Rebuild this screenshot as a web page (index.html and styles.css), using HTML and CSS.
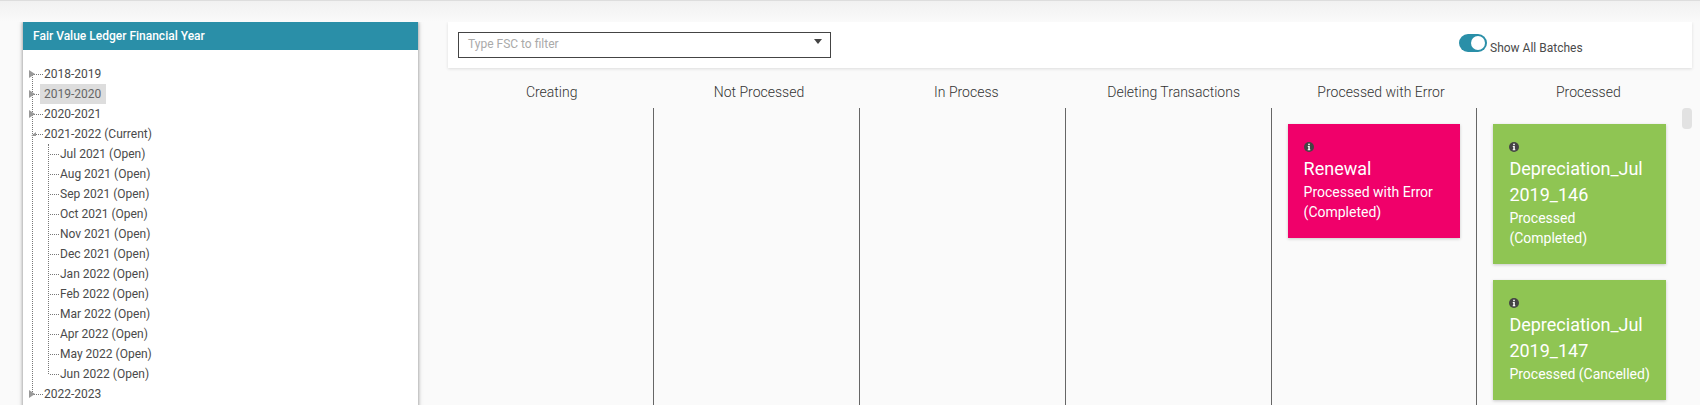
FILE: index.html
```html
<!DOCTYPE html>
<html lang="en">

<head>
    <meta charset="UTF-8">
    <title>Batches</title>
    <link rel="stylesheet" href="styles.css">
</head>

<body>
    <div class="topstrip"></div>
    <div class="main">
        <div class="panel">
            <div class="panel-head">Fair Value Ledger Financial Year</div>
            <ul class="tree">
                <li class="closed"><span class="node">2018-2019</span></li>
                <li class="closed"><span class="node selected">2019-2020</span></li>
                <li class="closed"><span class="node">2020-2021</span></li>
                <li class="open"><span class="node">2021-2022 (Current)</span>
                    <ul class="subtree">
                        <li><span class="node">Jul 2021 (Open)</span></li>
                        <li><span class="node">Aug 2021 (Open)</span></li>
                        <li><span class="node">Sep 2021 (Open)</span></li>
                        <li><span class="node">Oct 2021 (Open)</span></li>
                        <li><span class="node">Nov 2021 (Open)</span></li>
                        <li><span class="node">Dec 2021 (Open)</span></li>
                        <li><span class="node">Jan 2022 (Open)</span></li>
                        <li><span class="node">Feb 2022 (Open)</span></li>
                        <li><span class="node">Mar 2022 (Open)</span></li>
                        <li><span class="node">Apr 2022 (Open)</span></li>
                        <li><span class="node">May 2022 (Open)</span></li>
                        <li><span class="node">Jun 2022 (Open)</span></li>
                    </ul>
                </li>
                <li class="closed"><span class="node">2022-2023</span></li>
            </ul>
        </div>

        <div class="board">
            <div class="filterbar">
                <div class="combo">
                    <span>Type FSC to filter</span>
                    <i class="combo-arrow"></i>
                </div>
                <div class="switch-wrap">
                    <div class="switch"><i></i></div>
                    <span class="switch-label">Show All Batches</span>
                </div>
            </div>

            <div class="headings">
                <div>Creating</div>
                <div>Not Processed</div>
                <div>In Process</div>
                <div>Deleting Transactions</div>
                <div>Processed with Error</div>
                <div>Processed</div>
            </div>

            <div class="lanes">
                <div class="columns">
                    <div class="column"></div>
                    <div class="column"></div>
                    <div class="column"></div>
                    <div class="column"></div>
                    <div class="column">
                        <div class="card error">
                            <svg class="info" viewBox="0 0 10 10"><circle cx="5" cy="5" r="5" fill="#444"/><rect x="4.200" y="1.700" width="1.600" height="1.500" fill="#fff"/><path d="M3.800 4.100h2v3.200h.5v.9H3.700v-.9h.6V5h-.5z" fill="#fff"/></svg>
                            <div class="card-title">Renewal</div>
                            <div class="card-status">Processed with Error (Completed)</div>
                        </div>
                    </div>
                    <div class="column">
                        <div class="card done">
                            <svg class="info" viewBox="0 0 10 10"><circle cx="5" cy="5" r="5" fill="#444"/><rect x="4.200" y="1.700" width="1.600" height="1.500" fill="#fff"/><path d="M3.800 4.100h2v3.200h.5v.9H3.700v-.9h.6V5h-.5z" fill="#fff"/></svg>
                            <div class="card-title">Depreciation_Jul 2019_146</div>
                            <div class="card-status">Processed (Completed)</div>
                        </div>
                        <div class="card done">
                            <svg class="info" viewBox="0 0 10 10"><circle cx="5" cy="5" r="5" fill="#444"/><rect x="4.200" y="1.700" width="1.600" height="1.500" fill="#fff"/><path d="M3.800 4.100h2v3.200h.5v.9H3.700v-.9h.6V5h-.5z" fill="#fff"/></svg>
                            <div class="card-title">Depreciation_Jul 2019_147</div>
                            <div class="card-status">Processed (Cancelled)</div>
                        </div>
                    </div>
                </div>
                <div class="scroll-track"><div class="scroll-thumb"></div></div>
            </div>
        </div>
    </div>
</body>

</html>
```
FILE: styles.css
```css
html,
body {
    height: 100%;
}

body {
    margin: 0;
    overflow: hidden;
    background: #fafafa;
    color: #4a4a4a;
    font-family: Roboto, "Liberation Sans", sans-serif;
    font-size: 12px;
}

.topstrip {
    height: 22px;
    box-sizing: border-box;
    border-top: 1px solid #ddd;
    background: linear-gradient(#f1f1f1, #fafafa);
}

.main {
    display: flex;
    height: 383px;
    overflow: hidden;
}

/* left tree panel */
.panel {
    width: 395px;
    height: 420px;
    margin-left: 23px;
    background: #fff;
    box-shadow: 0 0 4px rgba(0, 0, 0, 0.5);
    flex-shrink: 0;
}

.panel-head {
    height: 28px;
    line-height: 28px;
    padding-left: 10px;
    background: #2a8fa8;
    color: #fff;
    font-weight: 500;
}

.tree,
.subtree {
    list-style: none;
    margin: 0;
    padding: 0;
    position: relative;
}

.tree {
    margin-top: 14px;
    padding-left: 17px;
}

.tree li {
    position: relative;
}

.node {
    display: inline-block;
    position: relative;
    height: 20px;
    line-height: 20px;
    padding: 0 4px;
    vertical-align: top;
}

.selected {
    background: #ddd;
    color: #666;
    padding-right: 5px;
}

.tree::before,
.subtree::before {
    content: '';
    position: absolute;
    border-left: 1px dotted #777;
}

.tree::before {
    left: 9px;
    top: 10px;
    bottom: 10px;
}

.subtree {
    margin-left: 16px;
}

.subtree::before {
    left: -8px;
    top: 0;
    bottom: 10px;
}

/* dotted connector in front of each node */
.tree li::before {
    content: '';
    position: absolute;
    left: -7px;
    top: 10px;
    width: 10px;
    border-top: 1px dotted #777;
}

.subtree li::before {
    left: -6px;
    width: 9px;
}

/* expander arrows */
.closed::after,
.open::after {
    content: '';
    position: absolute;
    width: 0;
    height: 0;
}

.closed::after {
    left: -11px;
    top: 6px;
    border-left: 6px solid #999;
    border-top: 4px solid transparent;
    border-bottom: 4px solid transparent;
}

.open::after {
    left: -9px;
    top: 8px;
    border-right: 5px solid #999;
    border-top: 4px solid transparent;
}

/* filter bar */
.board {
    width: 1244px;
    margin-left: 30px;
    flex-shrink: 0;
}

.filterbar {
    height: 46px;
    display: flex;
    align-items: flex-start;
    justify-content: space-between;
    padding: 10px 0 0 10px;
    box-sizing: border-box;
    background: #fff;
    box-shadow: 0 1px 3px rgba(0, 0, 0, 0.12);
}

.combo {
    width: 373px;
    height: 26px;
    box-sizing: border-box;
    display: flex;
    justify-content: space-between;
    padding: 0 8px 0 9px;
    line-height: 22px;
    border: 1px solid #444;
    color: #aaa;
}

.combo-arrow {
    width: 0;
    height: 0;
    margin-top: 6px;
    border-left: 4px solid transparent;
    border-right: 4px solid transparent;
    border-top: 5px solid #444;
}

.switch-wrap {
    display: flex;
    width: 233px;
    margin-top: 2px;
}

.switch {
    width: 28px;
    height: 18px;
    box-sizing: border-box;
    padding: 2px;
    border-radius: 9px;
    background: #2a8fa8;
    display: flex;
    justify-content: flex-end;
}

.switch i {
    width: 14px;
    height: 14px;
    border-radius: 50%;
    background: #fff;
}

.switch-label {
    margin: 7px 0 0 3px;
    line-height: 14px;
}

/* kanban columns */
.headings {
    display: grid;
    grid-template-columns: repeat(6, 1fr);
    height: 40px;
    padding-top: 15px;
    box-sizing: border-box;
    text-align: center;
    font-size: 14px;
    font-weight: 300;
    line-height: 18px;
    color: #333;
}

.lanes {
    display: flex;
    height: 300px;
    padding-left: 0.4px;
}

.columns {
    flex: 1;
    display: grid;
    grid-template-columns: repeat(6, 1fr);
}

.column {
    padding: 16px 16.5px 0 16px;
    border-right: 1px solid #666;
    display: flex;
    flex-direction: column;
    gap: 16px;
    min-width: 0;
}

.column:last-child {
    border-right: 0;
    padding-right: 17px;
}

.scroll-track {
    width: 8.8px;
}

.scroll-thumb {
    width: 10px;
    height: 21px;
    margin-left: -1px;
    border-radius: 4px;
    background: #e2e2e2;
}

.card {
    padding: 18px 16px 16px;
    color: #fff;
    box-shadow: 0 1px 3px rgba(0, 0, 0, 0.2);
}

.error {
    background: #f0006a;
}

.done {
    background: #8fc553;
}

.info {
    display: block;
    width: 10px;
    height: 10px;
}

.card-title {
    margin-top: 4px;
    font-size: 18px;
    line-height: 26px;
}

.card-status {
    font-size: 14px;
    line-height: 20px;
}
```
